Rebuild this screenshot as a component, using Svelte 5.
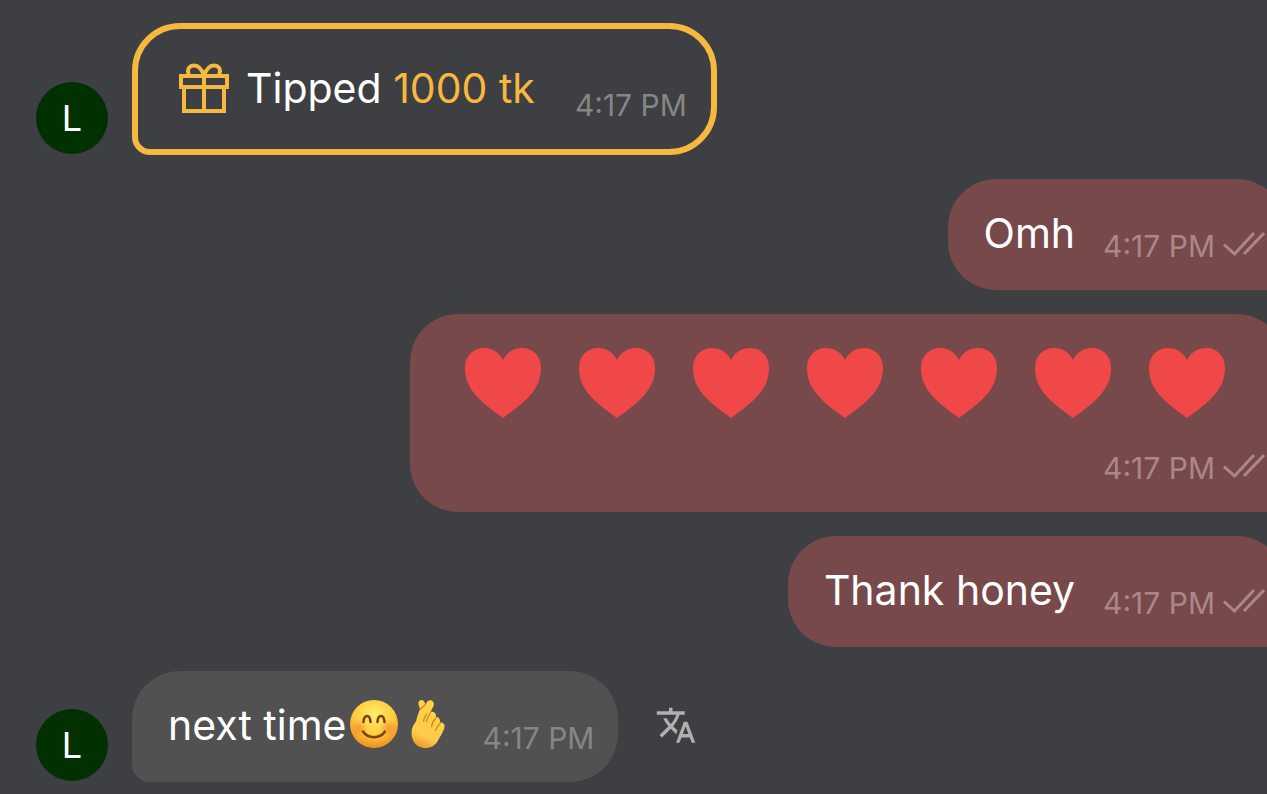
<script>
  const messages = [
    { id: 1, from: 'them', kind: 'tip', amount: '1000 tk', time: '4:17 PM' },
    { id: 2, from: 'me', kind: 'text', text: 'Omh', time: '4:17 PM' },
    { id: 3, from: 'me', kind: 'hearts', count: 7, time: '4:17 PM' },
    { id: 4, from: 'me', kind: 'text', text: 'Thank honey', time: '4:17 PM' },
    { id: 5, from: 'them', kind: 'text', text: 'next time', emoji: true, translate: true, time: '4:17 PM' }
  ];
</script>

<main class="chat">
  {#each messages as msg (msg.id)}
    <div class="row {msg.from}">
      {#if msg.from === 'them'}
        <div class="avatar">L</div>
      {/if}

      <div class="bubble {msg.kind}">
        {#if msg.kind === 'tip'}
          <div class="body">
            <svg class="gift" viewBox="0 0 60 60" aria-hidden="true">
              <path d="M7 18h46v11H7zM10 29v24h40V29M30 18v35" />
              <path d="M30 18c-2-6.500-5.500-10.500-10-10.500-4 0-6 2.500-6 5.500 0 2 .7 3.500 1.500 5M30 18c2-6.500 5.500-10.500 10-10.500 4 0 6 2.500 6 5.500 0 2-.7 3.500-1.500 5" />
            </svg>
            <span>Tipped <span class="amount">{msg.amount}</span></span>
          </div>
        {:else if msg.kind === 'hearts'}
          <div class="heart-list" role="img" aria-label="Hearts">
            {#each Array(msg.count) as _}
              <svg class="heart" viewBox="0 0 76 70" aria-hidden="true">
                <path d="M38 12C34 4 27 0 19 0 8 0 0 8 0 20c0 22 16 34 38 50 22-16 38-28 38-50C76 8 68 0 57 0 49 0 42 4 38 12z" />
              </svg>
            {/each}
          </div>
        {:else}
          <div class="body">
            <span>{msg.text}</span>
            {#if msg.emoji}
              <svg class="emoji" viewBox="0 0 54 54" role="img" aria-label="Smiling face">
                <defs>
                  <radialGradient id="face" cx="50%" cy="32%" r="68%">
                    <stop offset="0" stop-color="#ffee6e" />
                    <stop offset="0.6" stop-color="#fdcb3f" />
                    <stop offset="1" stop-color="#ee8f1c" />
                  </radialGradient>
                  <radialGradient id="cheek">
                    <stop offset="0" stop-color="#f4762c" stop-opacity="0.6" />
                    <stop offset="1" stop-color="#f4762c" stop-opacity="0" />
                  </radialGradient>
                </defs>
                <circle cx="27" cy="26" r="24" fill="url(#face)" />
                <circle cx="12" cy="30" r="9" fill="url(#cheek)" />
                <circle cx="42" cy="30" r="9" fill="url(#cheek)" />
                <g fill="none" stroke="#7a4310" stroke-width="2.500" stroke-linecap="round">
                  <path d="M16.500 24c.5-8 6.500-8 7 0M30.500 24c.5-8 6.500-8 7 0" />
                  <path d="M16 33.500c5 7.500 17 7.500 22 0" />
                </g>
              </svg>
              <svg class="emoji" viewBox="0 0 54 54" role="img" aria-label="Finger heart">
                <defs>
                  <linearGradient id="hand" x1="0.6" y1="0" x2="0.3" y2="1">
                    <stop offset="0" stop-color="#ffd445" />
                    <stop offset="0.75" stop-color="#fecb4b" />
                    <stop offset="1" stop-color="#e99a25" />
                  </linearGradient>
                </defs>
                <path
                  fill="url(#hand)"
                  d="M24.500 6.500C23.500 3 22 1.500 20 2c-2.500.5-3 2.500-2.300 5l1.300 4c-1.500 4-3 8-4 12.500-2.500 3-4.500 6.500-4.500 11.500C10.500 43.500 16 50 24 50c6 0 10.500-2.500 13-7.500 2.500-4.500 6-10 6.500-13.500.5-3.500-2-5-4.500-4.500.3-3.500-1-5.500-4-5.500.5-3.500-2-6-5.500-5l3-6c1-2.500 0-4.500-1.800-5.500-2-.8-3.700 0-4.700 1.500z"
                />
                <path
                  fill="none"
                  stroke="#d08a20"
                  stroke-width="1.300"
                  stroke-linecap="round"
                  d="M19.500 11l5-4.500M25.500 16c-1.500 2.500-2.500 4.500-3 7M29.500 14.500c-2 3-3.500 6-4 9M35 20c-2.500 2.500-4 5-4.500 8.500M39 25.500c-2 2-3.500 4-4.500 7"
                />
              </svg>
            {/if}
          </div>
        {/if}

        <div class="meta">
          <time>{msg.time}</time>
          {#if msg.from === 'me'}
            <svg class="checks" viewBox="0 0 42 30" role="img" aria-label="Read">
              <path d="M1 13.500l10.500 9.500L31 2M21 23L41 2" />
            </svg>
          {/if}
        </div>
      </div>

      {#if msg.translate}
        <button type="button" class="translate" aria-label="Translate message">
          <svg viewBox="0 1 24 24" aria-hidden="true">
            <path d="M12.870 15.070l-2.540-2.510.030-.030A17.520 17.520 0 0 0 14.070 6H17V4h-7V2H8v2H1v2h11.170C11.500 7.920 10.440 9.750 9 11.350 8.070 10.320 7.300 9.190 6.690 8h-2c.730 1.630 1.730 3.170 2.980 4.560l-5.090 5.020L4 19l5-5 3.110 3.110.760-2.040zM18.500 10h-2L12 22h2l1.120-3h4.750L21 22h2l-4.500-12zm-2.620 7l1.620-4.330L19.120 17h-3.240z" />
          </svg>
        </button>
      {/if}
    </div>
  {/each}
</main>

<style>
  :global(body) {
    background: #3d3f42;
  }

  .chat {
    display: flex;
    flex-direction: column;
    gap: 24px;
    padding: 23px 0 12px 36px;
    overflow: hidden;
    color: #fff;
    font-family: Inter, sans-serif;
    font-size: 41px;
    line-height: 60px;
  }

  .row {
    display: flex;
    align-items: flex-end;
  }

  /* own messages run past the right edge of the window */
  .row.me {
    justify-content: flex-end;
    margin-right: -18px;
  }

  .avatar {
    display: flex;
    align-items: center;
    justify-content: center;
    flex-shrink: 0;
    width: 72px;
    height: 72px;
    margin: 0 24px 1px 0;
    border-radius: 50%;
    background: #013001;
    font-size: 36px;
  }

  .bubble {
    display: flex;
    gap: 28px;
    padding: 24px 24px 24px 36px;
    border-radius: 48px 48px 48px 18px;
    background: #515151;
    white-space: nowrap;
  }

  .me .bubble {
    padding-right: 20px;
    border-radius: 48px 48px 18px 48px;
    background: #77494b;
  }

  .bubble.tip {
    gap: 40px;
    border: 6px solid #f7b83f;
    background: none;
  }

  .bubble.hearts {
    flex-direction: column;
    gap: 0;
  }

  .body {
    display: flex;
    align-items: center;
    padding-bottom: 3px;
  }

  .tip .body {
    gap: 12px;
    height: 69px;
  }

  .amount {
    color: #f7b83f;
  }

  .gift {
    width: 60px;
    height: 60px;
    fill: none;
    stroke: #f7b83f;
    stroke-width: 4;
  }

  .heart-list {
    display: flex;
    height: 100px;
    padding: 10px 21px 0 0;
  }

  .heart {
    width: 76px;
    height: 70px;
    margin: 0 19px;
    fill: #f04848;
  }

  .emoji {
    width: 54px;
    height: 54px;
  }

  .meta {
    display: flex;
    align-items: center;
    align-self: flex-end;
    gap: 8px;
    color: #868686;
    font-size: 30px;
    line-height: 40px;
  }

  .me .meta {
    color: #ad8788;
  }

  .checks {
    width: 42px;
    height: 30px;
    fill: none;
    stroke: currentColor;
    stroke-width: 3;
  }

  .translate {
    align-self: center;
    margin-left: 37px;
    padding: 0;
    border: none;
    background: none;
    color: #b0b0b0;
    cursor: pointer;
  }

  .translate svg {
    display: block;
    width: 42px;
    height: 42px;
    fill: currentColor;
  }
</style>
